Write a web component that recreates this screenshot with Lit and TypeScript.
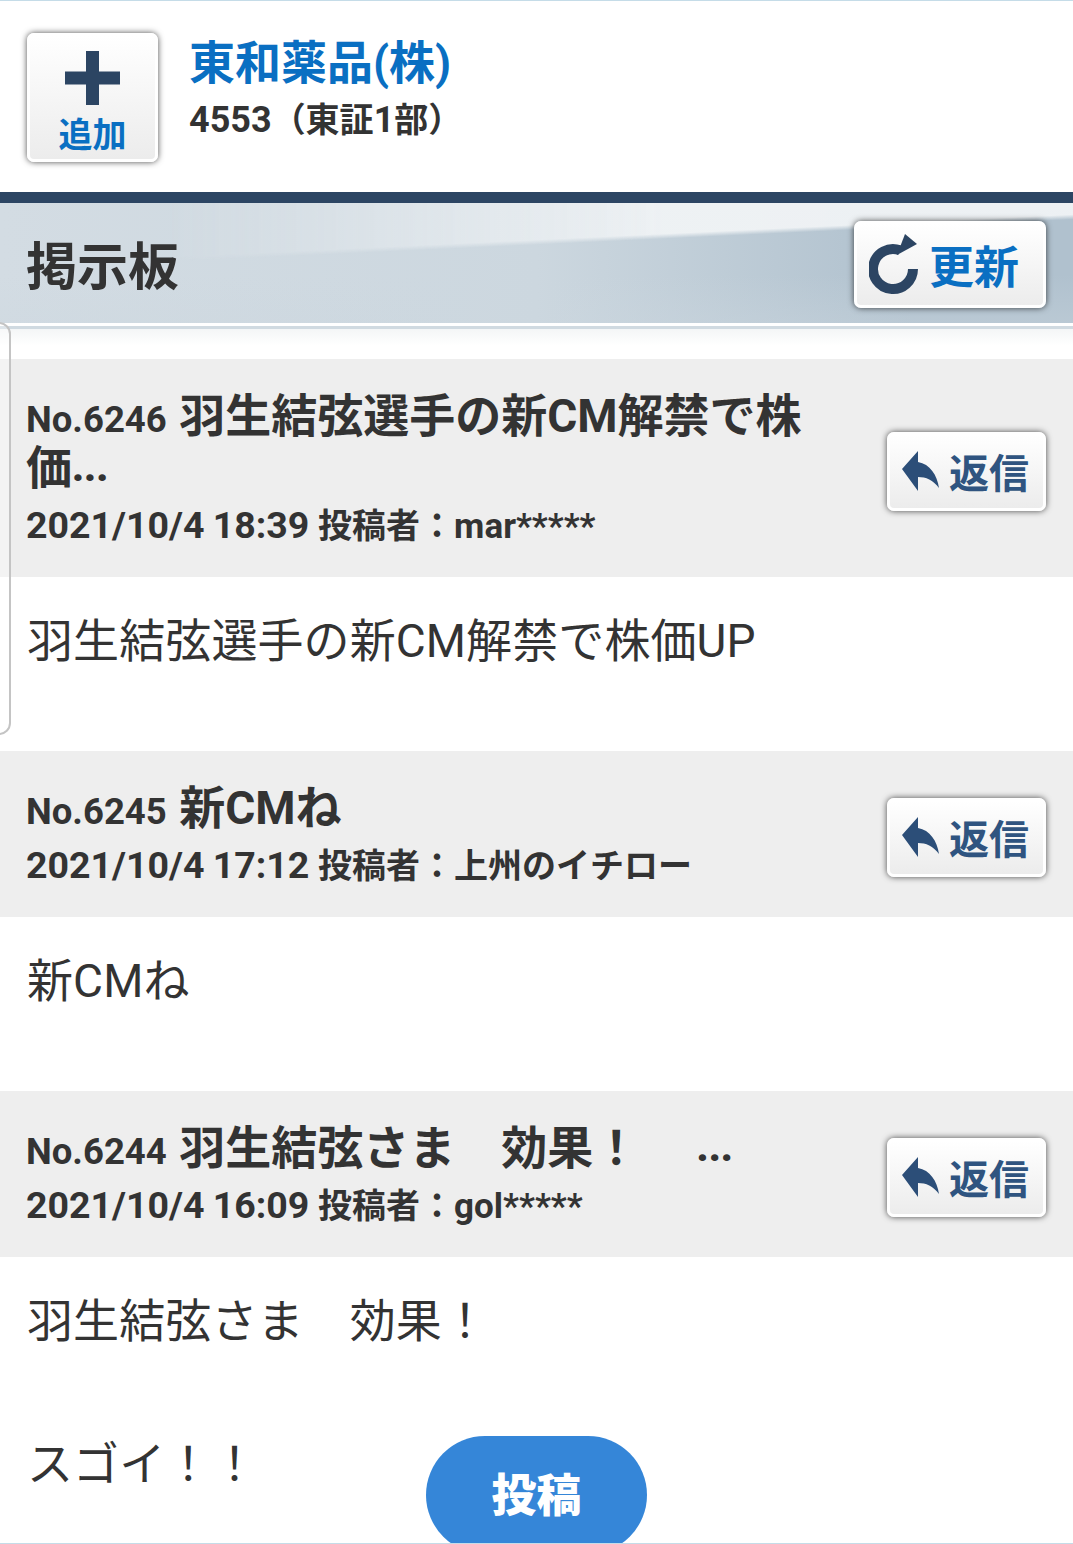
import { LitElement, html, css } from "lit";
import { customElement } from "lit/decorators.js";

const posts = [
  {
    no: "No.6246",
    title: "羽生結弦選手の新CM解禁で株価",
    date: "2021/10/4 18:39",
    poster: "投稿者：mar*****",
    body: ["羽生結弦選手の新CM解禁で株価UP"],
    cut: true,
  },
  {
    no: "No.6245",
    title: "新CMね",
    date: "2021/10/4 17:12",
    poster: "投稿者：上州のイチロー",
    body: ["新CMね"],
    cut: false,
  },
  {
    no: "No.6244",
    title: "羽生結弦さま　効果！　 ",
    date: "2021/10/4 16:09",
    poster: "投稿者：gol*****",
    body: ["羽生結弦さま　効果！", "スゴイ！！"],
    cut: true,
  },
];

// small text: latin runs at full size, kanji/kana a bit smaller
const mix = (text: string) =>
  text
    .split(/([^\x00-\x7f]+)/)
    .map((part, i) => (i % 2 ? html`<span class="cjk">${part}</span>` : part));

@customElement("app-root")
export class AppRoot extends LitElement {
  static styles = css`
    :host {
      display: block;
      height: 1544px;
      overflow: hidden;
      position: relative;
      background: #fff;
      color: #333;
      font-family: Roboto, "Noto Sans CJK JP", sans-serif;
      border-top: 1px solid #c5dce8;
      box-sizing: border-box;
    }
    .btn {
      box-sizing: border-box;
      background: linear-gradient(#fff, #ececec);
      border: 3px solid #fff;
      border-radius: 7px;
      box-shadow: 0 0 6px rgba(0, 0, 0, 0.7);
      display: flex;
      align-items: center;
    }
    .cjk {
      font-size: 34px;
      line-height: 1;
    }
    .stock {
      height: 191px;
      display: flex;
      align-items: flex-start;
      padding: 32px 0 0 27px;
      box-sizing: border-box;
    }
    .add {
      width: 131px;
      height: 129px;
      flex-direction: column;
      color: #0a6fc2;
      font-size: 34px;
      font-weight: 700;
      line-height: 40px;
      padding-top: 15px;
    }
    .add svg {
      display: block;
      margin-bottom: 10px;
    }
    .names {
      margin-left: 31px;
    }
    .name {
      color: #0a6fc2;
      font-size: 46px;
      font-weight: 700;
      line-height: 60px;
    }
    .code {
      font-size: 36px;
      font-weight: 700;
      line-height: 44px;
      margin-top: 5px;
      white-space: pre;
    }
    .rule {
      height: 11px;
      background: #2c4563;
    }
    .board {
      position: relative;
      height: 120px;
      box-sizing: border-box;
      display: flex;
      align-items: center;
      justify-content: space-between;
      padding: 0 27px;
      background:
        linear-gradient(rgba(204, 215, 223, 0) 60%, rgba(204, 215, 223, 0.35)),
        linear-gradient(90deg, #d3dce3 0, #ccd7df 50%, #b0c1ce 85%, #b0c1ce 100%);
    }
    .board::before {
      content: "";
      position: absolute;
      inset: 0;
      background: linear-gradient(177.3deg, rgba(240, 243, 245, 0.95) 0 62px, rgba(240, 243, 245, 0) 67px);
      -webkit-mask-image: linear-gradient(90deg, transparent 15%, #000 62%);
      mask-image: linear-gradient(90deg, transparent 15%, #000 62%);
    }
    .board h1 {
      position: relative;
      margin: 10px 0 0 -1px;
      font-size: 51px;
      font-weight: 700;
      line-height: 60px;
    }
    .refresh {
      position: relative;
      width: 192px;
      height: 87px;
      margin-top: 2px;
      padding-left: 12px;
      gap: 8px;
      color: #0a6fc2;
      font-size: 45px;
      font-weight: 700;
    }
    .sep {
      height: 36px;
      box-sizing: border-box;
      border-top: 3px solid #fff;
      background: linear-gradient(#d0dae1 0 3px, #f4f6f7 3px, #fff 60%);
    }
    .post-head {
      background: #eee;
      display: flex;
      justify-content: space-between;
      align-items: center;
      padding: 31px 27px 25px 26px;
    }
    .titles {
      width: 790px;
    }
    .title {
      line-height: 52px;
      font-size: 46px;
      font-weight: 700;
    }
    .no {
      font-size: 36.500px;
      line-height: 1;
      margin-right: 1px;
    }
    .dots {
      font-size: 40px;
      font-weight: 900;
      line-height: 1;
      vertical-align: 3px;
    }
    .meta {
      font-size: 35px;
      font-weight: 700;
      line-height: 50px;
      margin-top: 8px;
    }
    .date {
      font-size: 37.500px;
      line-height: 1;
      word-spacing: -1px;
    }
    .reply {
      width: 159px;
      height: 79px;
      flex-shrink: 0;
      padding-left: 12px;
      gap: 10px;
      color: #2f5480;
      font-size: 40px;
      font-weight: 700;
    }
    .post-body {
      height: 174px;
      box-sizing: border-box;
      padding: 34px 27px 0;
      font-size: 46px;
      line-height: 60px;
      letter-spacing: 0.1px;
    }
    .post-body p {
      margin: 0 0 83px;
    }
    .tab {
      position: absolute;
      left: -20px;
      top: 321px;
      width: 27px;
      height: 409px;
      border: 2px solid #c4c4c4;
      border-radius: 12px;
      background: rgba(255, 255, 255, 0.3);
    }
    .post-btn {
      position: absolute;
      left: 426px;
      top: 1435px;
      width: 221px;
      height: 118px;
      border-radius: 59px;
      background: #3586d8;
      color: #fff;
      font-size: 45px;
      font-weight: 900;
      text-align: center;
      line-height: 122px;
    }
    .edge {
      position: absolute;
      left: 0;
      right: 0;
      bottom: 0;
      height: 1px;
      background: #c5dce8;
    }
  `;

  render() {
    return html`
      <div class="stock">
        <div class="btn add">
          <svg width="55" height="54" viewBox="0 0 55 54"><path d="M21 0h13v20.500h21v13H34V54H21V33.500H0v-13h21z" fill="#2c4563"/></svg>
          追加
        </div>
        <div class="names">
          <div class="name">東和薬品(株)</div>
          <div class="code">${mix("4553（東証1部）")}</div>
        </div>
      </div>
      <div class="rule"></div>
      <div class="board">
        <h1>掲示板</h1>
        <div class="btn refresh">
          <svg width="52" height="62" viewBox="0 0 52 62"><path d="M31 17.300A20 20 0 1 0 44 36" fill="none" stroke="#2c4563" stroke-width="10"/><path d="M36 1 L48 11 L28 22z" fill="#2c4563"/></svg>
          更新
        </div>
      </div>
      <div class="sep"></div>
      ${posts.map(
        (p) => html`
          <div class="post-head">
            <div class="titles">
              <div class="title"><span class="no">${p.no}</span> ${p.title}${p.cut ? html`<span class="dots">...</span>` : ""}</div>
              <div class="meta"><span class="date">${p.date}</span> ${mix(p.poster)}</div>
            </div>
            <div class="btn reply">
              <svg width="37" height="40" viewBox="0 0 37 40"><path d="M0 18 L16 0 V11 C28 13 35 24 37 37 C31 29 24 26 16 26 V40 z" fill="#2c4e78"/></svg>
              返信
            </div>
          </div>
          <div class="post-body">${p.body.map((line) => html`<p>${line}</p>`)}</div>
        `
      )}
      <div class="tab"></div>
      <div class="post-btn">投稿</div>
      <div class="edge"></div>
    `;
  }
}
